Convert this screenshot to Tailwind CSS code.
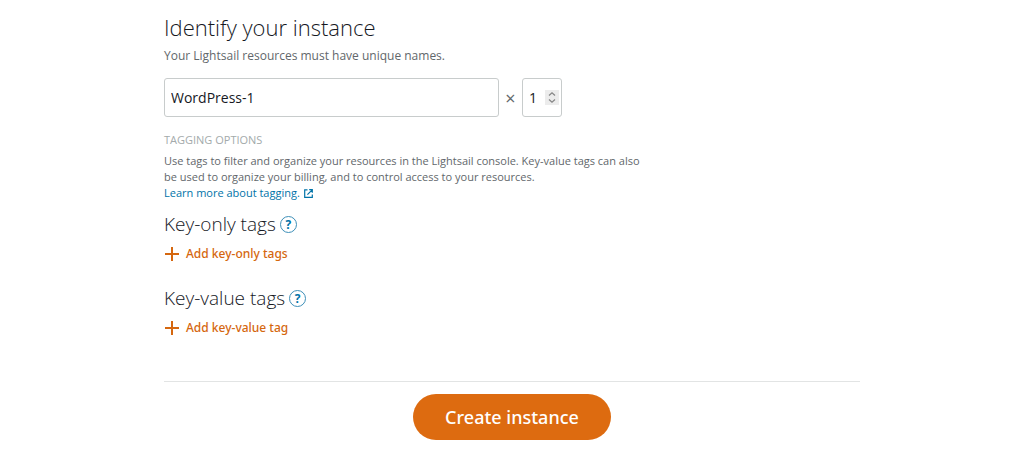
<!DOCTYPE html>
<html lang="en">
<head>
  <meta charset="UTF-8">
  <meta name="viewport" content="width=device-width, initial-scale=1.0">
  <title>Create an instance</title>
  <script src="https://cdn.jsdelivr.net/npm/@tailwindcss/browser@4"></script>
</head>
<body class="bg-white font-['Open_Sans','Noto_Sans',sans-serif] text-[#62676b]">
  <main class="max-w-[696px] mx-auto pt-[11px] pb-4">
    <!-- Instance name -->
    <section>
      <h1 class="text-[22px] leading-8 font-light text-[#16191f]">Identify your instance</h1>
      <p class="mt-px text-[12px] leading-6">Your Lightsail resources must have unique names.</p>
      <div class="mt-[10px] flex items-center">
        <input type="text" aria-label="Instance name" value="WordPress-1" class="w-[335px] h-[39px] px-[6px] border border-[#c8cccc] rounded-[3px] text-sm text-[#16191f]">
        <span class="w-[23px] text-center text-lg leading-6">×</span>
        <div class="relative">
          <input type="text" inputmode="numeric" aria-label="Number of instances" value="1" class="w-10 h-[39px] pl-[6px] border border-[#c8cccc] rounded-[3px] text-sm text-[#16191f]">
          <svg class="absolute right-[3px] top-3 w-[14px] h-[15px] bg-[#ececec]" viewBox="0 0 14 15" fill="none" stroke="#858585" stroke-width="1.2" aria-hidden="true">
            <path d="M4 5.5 7 2.8l3 2.7M4 9.5l3 2.7 3-2.7"/>
          </svg>
        </div>
      </div>
    </section>

    <!-- Tagging -->
    <section class="mt-[15px]">
      <h2 class="text-[11px] leading-4 text-[#a3aaab]">TAGGING OPTIONS</h2>
      <p class="mt-[5px] max-w-[490px] text-[11px] leading-4">
        Use tags to filter and organize your resources in the Lightsail console. Key-value tags can also
        be used to organize your billing, and to control access to your resources.
      </p>
      <a href="#" class="flex items-center gap-1 w-fit text-[11px] leading-4 font-medium text-[#0073a8]">
        Learn more about tagging.
        <svg class="w-[9px] h-[9px]" viewBox="0 0 9 9" fill="none" stroke="currentColor" stroke-width="1.2" aria-hidden="true">
          <path d="M3.5.9H.7v7.4h7.6V5.5M5.2.7h3.1v3.1M8.2.8 3.4 5.6"/>
        </svg>
      </a>
    </section>

    <section class="mt-[7px]">
      <div class="flex items-center gap-1">
        <h3 class="text-[19px] leading-8 font-light text-[#16191f]">Key-only tags</h3>
        <button type="button" aria-label="About key-only tags" class="size-[17px] rounded-full border border-[#3d8fb8] text-[12px] leading-[15px] font-bold text-[#0073a8]">?</button>
      </div>
      <button type="button" class="mt-[2px] flex items-center gap-[6px] font-['Noto_Sans',sans-serif] text-[12px] leading-6 font-medium text-[#d5670f]">
        <svg class="w-4 h-4" viewBox="0 0 16 16" stroke="currentColor" stroke-width="2" aria-hidden="true">
          <path d="M8 1v14M1 8h14"/>
        </svg>
        Add key-only tags
      </button>
    </section>

    <section class="mt-4">
      <div class="flex items-center gap-1">
        <h3 class="text-[19px] leading-8 font-light text-[#16191f]">Key-value tags</h3>
        <button type="button" aria-label="About key-value tags" class="size-[17px] rounded-full border border-[#3d8fb8] text-[12px] leading-[15px] font-bold text-[#0073a8]">?</button>
      </div>
      <button type="button" class="mt-[2px] flex items-center gap-[6px] font-['Noto_Sans',sans-serif] text-[12px] leading-6 font-medium text-[#d5670f]">
        <svg class="w-4 h-4" viewBox="0 0 16 16" stroke="currentColor" stroke-width="2" aria-hidden="true">
          <path d="M8 1v14M1 8h14"/>
        </svg>
        Add key-value tag
      </button>
    </section>

    <!-- Submit -->
    <div class="mt-[41px] pt-3 border-t border-[#e2e4e4] flex justify-center">
      <button type="submit" class="px-8 h-[46px] rounded-full bg-[#dd6b10] font-['Noto_Sans',sans-serif] text-lg font-medium text-white">Create instance</button>
    </div>
  </main>
</body>
</html>
